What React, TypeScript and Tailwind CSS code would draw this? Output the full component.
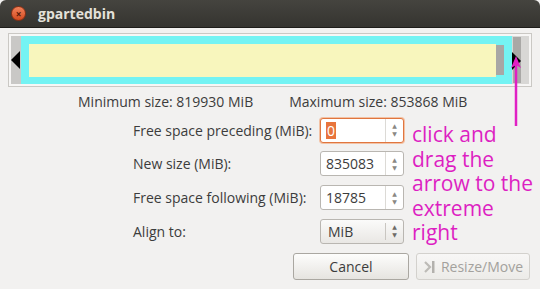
import React from "react";

const font = { fontFamily: '"Open Sans", "DejaVu Sans", sans-serif' };

function Spin({ value, focused }: { value: string; focused?: boolean }) {
  return (
    <div
      className={`flex h-[25px] w-[84px] rounded-[3px] border bg-white ${
        focused ? "border-[#e0763f] shadow-[0_0_0_1px_#f3c2a5]" : "border-[#b9b6b1]"
      }`}
    >
      <div className="flex flex-1 items-center pl-[5px] text-[14px] text-[#3c3c3c]">
        {focused ? (
          <span className="bg-[#e8743c] px-[1px] leading-[17px] text-white">{value}</span>
        ) : (
          value
        )}
      </div>
      <div className="flex w-[18px] flex-col items-center justify-center border-l border-[#dcdad6] text-[6px] leading-[8px] text-[#8a8883]">
        <span>▲</span>
        <span>▼</span>
      </div>
    </div>
  );
}

export default function App() {
  return (
    <div className="relative flex h-[289px] w-[540px] flex-col overflow-hidden bg-[#f2f1f0]" style={font}>
      {/* title bar */}
      <div className="flex h-[28px] shrink-0 items-center rounded-t-[6px] border-b border-[#1e1d1a] bg-gradient-to-b from-[#45443f] to-[#353430] pl-[11px]">
        <div className="flex h-[15px] w-[15px] items-center justify-center rounded-full border border-[#8c2f13] bg-gradient-to-b from-[#f2825a] to-[#d24a1e] text-[10px] font-bold leading-none text-[#5a1a08]">
          ×
        </div>
        <span className="ml-[12px] text-[14px] font-bold text-[#e4e1da]">gpartedbin</span>
      </div>

      {/* partition bar */}
      <div className="px-[8px] pt-[5px]">
        <div className="flex h-[54px] w-[524px] border border-[#cac8c4] bg-[#f7f6f5] p-[2px]">
          <div className="relative flex w-[10px] items-center bg-[#c9c8c6]">
            <div className="h-0 w-0 border-y-[9px] border-r-[9px] border-y-transparent border-r-black" />
          </div>
          <div className="flex w-[491px] items-center bg-[#74f3f3] px-[8px] py-[8px]">
            <div className="h-[33px] flex-1 bg-[#f8f6bd]" />
            <div className="h-[30px] w-[8px] bg-[#a8a7a5]" />
          </div>
          <div className="relative flex w-[17px] items-stretch bg-[#d8d7d5] py-[1px] pl-[1px]">
            <div className="w-[8px] bg-[#a9a8a6]" />
            <div className="absolute left-[0px] top-[16px] h-0 w-0 border-y-[9px] border-l-[9px] border-y-transparent border-l-black" />
          </div>
        </div>
      </div>

      {/* size info */}
      <div className="mt-[4px] flex text-[14px] text-[#3c3c3c]">
        <span className="ml-[78px]">Minimum size: 819930 MiB</span>
        <span className="ml-[36px]">Maximum size: 853868 MiB</span>
      </div>

      {/* form + note */}
      <div className="mt-[5px] flex">
        <div className="ml-[133px] grid grid-cols-[187px_84px] items-center gap-y-[7px] text-[14px] text-[#3c3c3c]">
          <span>Free space preceding (MiB):</span>
          <Spin value="0" focused />
          <span>New size (MiB):</span>
          <Spin value="835083" />
          <span>Free space following (MiB):</span>
          <Spin value="18785" />
          <span>Align to:</span>
          <div className="flex h-[25px] w-[84px] rounded-[3px] border border-[#b9b6b1] bg-gradient-to-b from-[#fbfbfa] to-[#e9e7e4]">
            <div className="flex flex-1 items-center pl-[7px] text-[14px] text-[#3c3c3c]">MiB</div>
            <div className="my-[3px] flex w-[18px] flex-col items-center justify-center border-l border-[#c9c6c1] text-[6px] leading-[8px] text-[#6d6b66]">
              <span>▲</span>
              <span>▼</span>
            </div>
          </div>
        </div>
        <div className="ml-[8px] mt-[5px] flex flex-col text-[21px] leading-[24.5px] text-[#dd1fc2]">
          <span>click and</span>
          <span>drag the</span>
          <span>arrow to the</span>
          <span>extreme</span>
          <span>right</span>
        </div>
      </div>

      {/* buttons */}
      <div className="mt-auto mb-[9px] flex justify-end gap-[7px] pr-[10px]">
        <button className="flex h-[27px] w-[116px] items-center justify-center rounded-[3px] border border-[#aaa7a1] bg-gradient-to-b from-[#fdfdfc] to-[#e6e4e0] text-[14px] text-[#3c3c3c]">
          Cancel
        </button>
        <button className="flex h-[27px] w-[114px] items-center justify-center gap-[4px] rounded-[3px] border border-[#d3d1cd] bg-gradient-to-b from-[#f8f7f6] to-[#ecebe8] text-[14px] text-[#a3a19d]">
          <svg width="14" height="14" viewBox="0 0 14 14">
            <path d="M2 2 L7 7 L2 12" fill="none" stroke="#bdbbb7" strokeWidth="2.2" />
            <rect x="9" y="1" width="2.5" height="12" fill="#b3b1ad" />
          </svg>
          Resize/Move
        </button>
      </div>

      {/* annotation arrow */}
      <svg className="absolute left-[508px] top-[56px]" width="16" height="72" viewBox="0 0 16 72">
        <line x1="8" y1="8" x2="8" y2="70" stroke="#e020c4" strokeWidth="2.5" />
        <path d="M8 0 L13 12 L8 9 L3 12 Z" fill="#e020c4" />
      </svg>
    </div>
  );
}
